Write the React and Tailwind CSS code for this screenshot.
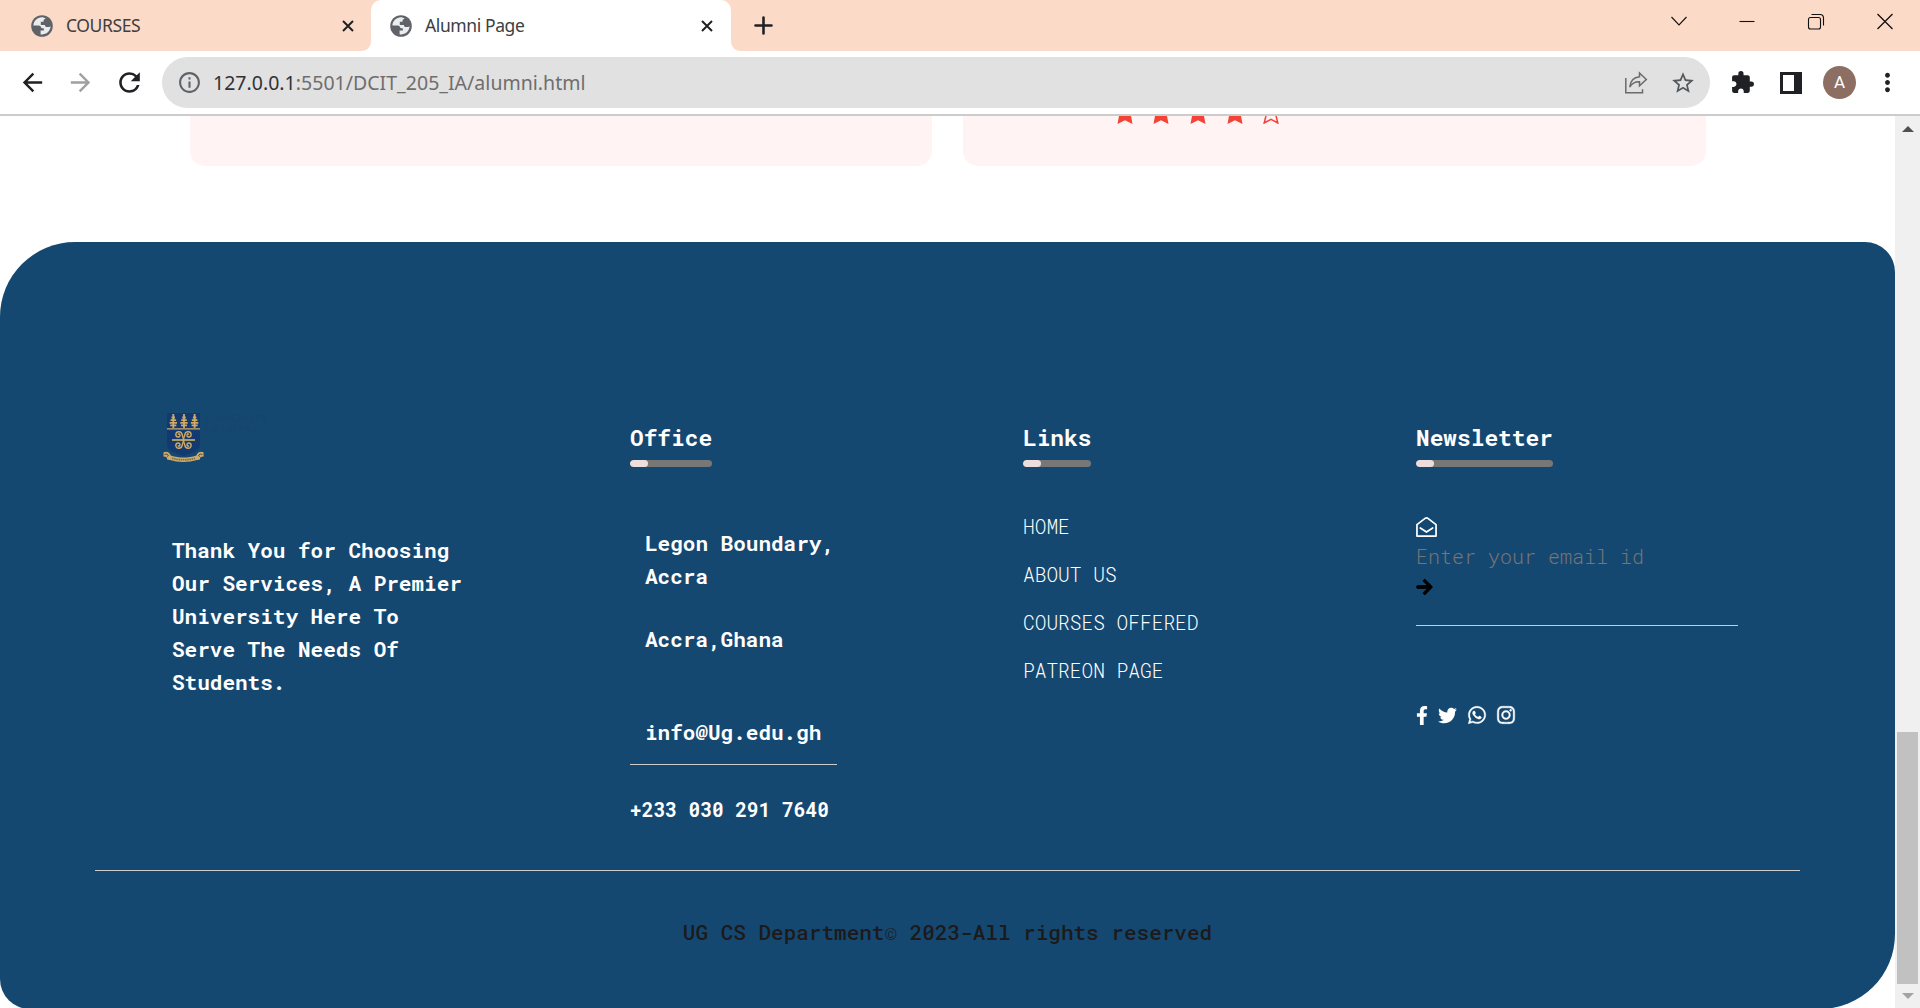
import React from "react";
import { FaArrowRight, FaFacebookF, FaInstagram, FaTwitter, FaWhatsapp } from "react-icons/fa";
import {
  MdArrowBack,
  MdArrowForward,
  MdExtension,
  MdInfoOutline,
  MdMoreVert,
  MdRefresh,
  MdStarBorder,
} from "react-icons/md";

function Globe() {
  return (
    <svg viewBox="0 0 22 22" className="size-[22px] shrink-0">
      <circle cx="11" cy="11" r="10.8" fill="#5f6368" />
      <path
        d="M11 2.2C6.2 2.2 2.6 6 2.4 10.400l5.200.1c1.500 0 2.700 1.100 2.700 2.600l2.600.3v2.200h-3.300v3.800c5 .7 9.700-2.700 10-8.100l-1.300.8h-3.600l-.9-2.200h-4V6.800h2.700l.2-2.100 2-1.100C13.500 2.800 12.300 2.200 11 2.200z"
        fill="#ffffff"
        fillOpacity="0.88"
      />
    </svg>
  );
}

function Tab({ title, active }) {
  return (
    <div
      className={
        active
          ? "relative flex h-full w-[360px] items-center rounded-t-[10px] bg-white pl-[19px] pr-[18px]"
          : "flex h-full w-[371px] items-center pl-[31px] pr-[17px]"
      }
    >
      <Globe />
      <span className="ml-[13px] flex-1 font-['Noto_Sans',sans-serif] text-[17.500px] font-normal tracking-[-0.4px] whitespace-nowrap text-[#3c4043]">
        {title}
      </span>
      <svg viewBox="0 0 12 12" className="size-3" stroke="#202124" strokeWidth="2">
        <path d="M1 1l10 10M11 1L1 11" />
      </svg>
      {active && (
        <>
          <span className="absolute bottom-0 -left-[9px] size-[9px] bg-white">
            <span className="block size-full rounded-br-[9px] bg-[#fcdac8]" />
          </span>
          <span className="absolute -right-[9px] bottom-0 size-[9px] bg-white">
            <span className="block size-full rounded-bl-[9px] bg-[#fcdac8]" />
          </span>
        </>
      )}
    </div>
  );
}

function TabStrip() {
  return (
    <div className="flex h-[51px] items-center bg-[#fcdac8]">
      <Tab title="COURSES" />
      <Tab title="Alumni Page" active />
      <svg viewBox="0 0 19 19" className="ml-[23px] size-[19px]" stroke="#202124" strokeWidth="2.600" strokeLinecap="round">
        <path d="M9.500 1.500v16M1.500 9.500h16" />
      </svg>
      <svg
        viewBox="0 0 223 17"
        className="mr-[27px] mb-[8px] ml-auto h-[17px] w-[223px]"
        fill="none"
        stroke="#111111"
        strokeWidth="1.1"
      >
        <path d="M1.500 4l7.500 8 7.500-8" />
        <path d="M69.500 8.500h15" />
        <rect x="138.500" y="4.500" width="12" height="11.500" rx="2" />
        <path d="M141.500 1.500h8.500q3.500 0 3.500 3.500v7.500" />
        <path d="M207.500 1l15 15M222.500 1l-15 15" strokeWidth="1.300" />
      </svg>
    </div>
  );
}

function Toolbar() {
  return (
    <div className="flex h-[65px] items-center border-b-2 border-[#cccccc] bg-white pl-[18px]">
      <MdArrowBack className="size-[29px] text-[#202124]" />
      <MdArrowForward className="ml-[19px] size-[29px] text-[#a0a0a0]" />
      <MdRefresh className="ml-[19px] size-[31px] text-[#202124]" />
      <div className="ml-[17px] flex h-[51px] w-[1548px] items-center rounded-full bg-[#e1e1e1] pl-[15px]">
        <MdInfoOutline className="size-[25px] text-[#5f6368]" />
        <span className="ml-[11px] flex-1 font-['Noto_Sans',sans-serif] text-[19.500px] font-normal tracking-[0.020px] whitespace-nowrap text-[#6e6e6e]">
          <span className="text-[#303236]">127.0.0.1</span>:5501/DCIT_205_IA/alumni.html
        </span>
        <svg viewBox="0 0 24 24" className="size-6" fill="none" stroke="#6b6b6b" strokeWidth="1.500">
          <path d="M1.800 7v14.700h16.700v-3.500" />
          <path d="M15.500 2l6.800 6.500-6.800 6.200v-3.900c-4.500-.2-7.500 1.400-9.800 5.200.6-5.500 3.600-9.600 9.800-10.200z" />
        </svg>
        <MdStarBorder className="mr-[14px] ml-[22px] size-[26px] text-[#55585c]" />
      </div>
      <MdExtension className="ml-[20px] size-[25px] text-[#202124]" />
      <span className="ml-[25px] h-[22px] w-[22px] border-[3px] border-[#202124] [box-shadow:inset_-5px_0_0_#202124]" />
      <span className="ml-[21px] flex size-[33px] items-center justify-center rounded-full bg-[#8d6e63] font-['Roboto',sans-serif] text-[17px] text-white">
        A
      </span>
      <MdMoreVert className="ml-[17px] size-[29px] text-[#202124]" />
    </div>
  );
}

function Star({ hollow }) {
  return (
    <svg
      viewBox="0 0 24 22"
      className="h-[22px] w-6"
      fill={hollow ? "none" : "#f44336"}
      stroke="#f44336"
      strokeWidth={hollow ? "1.500" : "0"}
    >
      <path
        d={
          hollow
            ? "M12 1.500l3.200 6.500 7 1-5.100 5 1.700 7L12 17.400l-6.800 3.600L6.900 14 1.800 9l7-1z"
            : "M12 0l3.700 7.200 8.300 1.200-6 5.700 1.500 7.900L12 18.200 4.500 22 6 14.100 0 8.400l8.300-1.200z"
        }
      />
    </svg>
  );
}

function Heading({ children }) {
  return (
    <div className="w-fit">
      <h3 className="text-[22.8px] leading-9 font-bold text-white">{children}</h3>
      <div className="mt-[5px] h-[7px] overflow-hidden rounded-full bg-[#777777]">
        <div className="h-full w-[18px] rounded-full bg-[#eedddd]" />
      </div>
    </div>
  );
}

function Tree({ x }) {
  return (
    <g transform={`translate(${x} 0)`} fill="none" stroke="#cfaa66">
      <path d="M0 1v14" strokeWidth="1.800" />
      <path d="M-1.700 4.500h3.400M-2.800 7.200h5.600M-3.700 9.800h7.400M-3 12.300h6" strokeWidth="1.800" />
    </g>
  );
}

function Swirl({ flip }) {
  return (
    <path
      transform={flip}
      d="M0 0C.2-2 1-3.300 1.300-4.800 1.800-7.600 6.800-8.200 7.300-5c.3 2.500-3.600 3.300-4 1.100-.2-1.200 1.300-1.900 2-.9"
    />
  );
}

function Crest() {
  return (
    <div className="flex h-[50px] items-start">
      <svg viewBox="0 0 42 50" className="h-[50px] w-[42px] shrink-0" fill="#cfaa66">
        <path d="M4 0h33v32c0 6-9 8-16.500 11C13 40 4 38 4 32z" fill="#133a70" />
        <Tree x={10.3} />
        <Tree x={21} />
        <Tree x={31.6} />
        <path d="M4 15.300h33v1.200H4z" />
        <g fill="none" stroke="#cfaa66" strokeWidth="1.300" transform="translate(20.500 27)">
          <path d="M-11.500 0h23" strokeWidth="1.700" />
          <Swirl flip="scale(1.05 1.15)" />
          <Swirl flip="scale(-1.05 1.15)" />
          <Swirl flip="scale(1.05 -1.15)" />
          <Swirl flip="scale(-1.05 -1.15)" />
        </g>
        <path d="M.5 39.500c1.800-1.500 5-1 6.300 1.300l1 1.700c8.500 2.700 17 2.700 25.500 0l1-1.700c1.400-2.300 4.500-2.800 6.300-1.300v4l-3 .5-1 2.800-2.600.2c-8.500 2.500-19 2.500-27 0L4.400 46.800l-1-2.800-2.900-.5z" />
        <path d="M9 45.300q11.500 3 23 0" fill="none" stroke="#6f6a56" strokeWidth="1.600" strokeDasharray="1.500 .7" />
        <path d="M1.500 41.500q3-1.500 4 1l-1.500 1M39.500 41.500q-3-1.500-4 1l1.500 1" fill="none" stroke="#4b5560" strokeWidth="1" />
      </svg>
      <p className="font-['Liberation_Serif',serif] text-[10px] leading-[11px] font-bold whitespace-nowrap text-[#154473]">
        UNIVERSITY
        <br />
        OF GHANA
      </p>
    </div>
  );
}

const LINKS = ["HOME", "ABOUT US", "COURSES OFFERED", "PATREON PAGE"];

function Footer() {
  return (
    <footer className="mt-[76px] flex h-[767px] shrink-0 flex-col rounded-tl-[75px] rounded-tr-[30px] rounded-br-[75px] rounded-bl-[30px] bg-[#154870] pt-[171px] font-['Roboto_Mono',monospace] text-white">
      <div className="flex h-[457px] pl-[163px]">
        <div className="w-[467px]">
          <Crest />
          <p className="mt-[71px] ml-[9px] w-[300px] text-[21px] leading-[33px] font-bold">
            Thank You for Choosing Our Services, A Premier University Here To Serve The Needs Of Students.
          </p>
        </div>
        <div className="w-[393px] pt-[6px]">
          <Heading>Office</Heading>
          <div className="w-[207px] border-b border-[#cccccc] pb-[15px] pl-[15px] text-[21px] leading-[33px] font-bold">
            <p className="mt-[60px]">Legon Boundary, Accra</p>
            <p className="mt-[30px]">Accra,Ghana</p>
            <p className="mt-[60px]">info@Ug.edu.gh</p>
          </div>
          <p className="mt-7 text-[19.5px] leading-[33px] font-bold">+233 030 291 7640</p>
        </div>
        <div className="w-[393px] pt-[6px]">
          <Heading>Links</Heading>
          <ul className="mt-[43px] flex flex-col gap-[15px] text-[19.5px] leading-[33px] font-light">
            {LINKS.map((link) => (
              <li key={link}>{link}</li>
            ))}
          </ul>
        </div>
        <div className="w-[322px] pt-[6px]">
          <Heading>Newsletter</Heading>
          <form className="mt-[49px] flex h-[110px] flex-col items-start border-b border-[#cccccc]">
            <svg
              viewBox="0 0 22 22"
              className="h-[22px] w-[21px]"
              fill="none"
              stroke="#ffffff"
              strokeWidth="1.800"
              strokeLinecap="round"
              strokeLinejoin="round"
            >
              <path d="M1 20.500V8.500L9.500 2q1.500-1.200 3 0L21 8.500v12z" />
              <path d="M4.500 12l6.500 4.300 6.500-4.300" />
            </svg>
            <input
              type="text"
              placeholder="Enter your email id"
              className="mt-[5px] h-[26px] w-[300px] bg-transparent text-[20px] font-light text-white placeholder:text-[#757575]"
            />
            <FaArrowRight className="mt-[9px] h-[18px] w-[17px] text-black" stroke="currentColor" strokeWidth="24" />
          </form>
          <div className="mt-[79px] flex h-5 items-center">
            <FaFacebookF className="h-[19px] w-3" />
            <FaTwitter className="ml-[10px] size-[19px]" />
            <FaWhatsapp className="ml-[10px] size-[20px]" stroke="currentColor" strokeWidth="10" />
            <FaInstagram className="ml-[9px] size-[20px]" stroke="currentColor" strokeWidth="10" />
          </div>
        </div>
      </div>
      <div className="mx-[95px] h-px shrink-0 bg-[#cccccc]" />
      <p className="mt-[45px] text-center text-[21px] leading-[33px] font-medium text-[#1c1a1a]">
        UG CS Department<span className="font-light">©</span> 2023-All rights reserved
      </p>
    </footer>
  );
}

function Scrollbar() {
  return (
    <div className="flex w-[25px] shrink-0 flex-col items-center bg-[#f0f0f0] pt-[10px]">
      <svg viewBox="0 0 12 6" className="h-[6px] w-3">
        <path d="M0 6l6-6 6 6z" fill="#505050" />
      </svg>
      <div className="mt-[600px] h-[252px] w-[21px] bg-[#c1c1c1]" />
      <svg viewBox="0 0 12 6" className="mt-[9px] h-[6px] w-3">
        <path d="M0 0l6 6 6-6z" fill="#a3a3a3" />
      </svg>
    </div>
  );
}

export default function App() {
  return (
    <div className="flex h-[1008px] w-[1920px] flex-col overflow-hidden bg-white">
      <TabStrip />
      <Toolbar />
      <div className="flex min-h-0 flex-1">
        <main className="flex w-[1895px] flex-col overflow-hidden">
          <div className="flex h-[50px] shrink-0 gap-[31px] pl-[190px]">
            <div className="w-[742px] rounded-b-[15px] bg-[#fff3f3]" />
            <div className="w-[743px] overflow-hidden rounded-b-[15px] bg-[#fff3f3] pl-[149.5px]">
              <div className="-mt-[14px] flex gap-[12.7px]">
                <Star />
                <Star />
                <Star />
                <Star />
                <Star hollow />
              </div>
            </div>
          </div>
          <Footer />
        </main>
        <Scrollbar />
      </div>
    </div>
  );
}
